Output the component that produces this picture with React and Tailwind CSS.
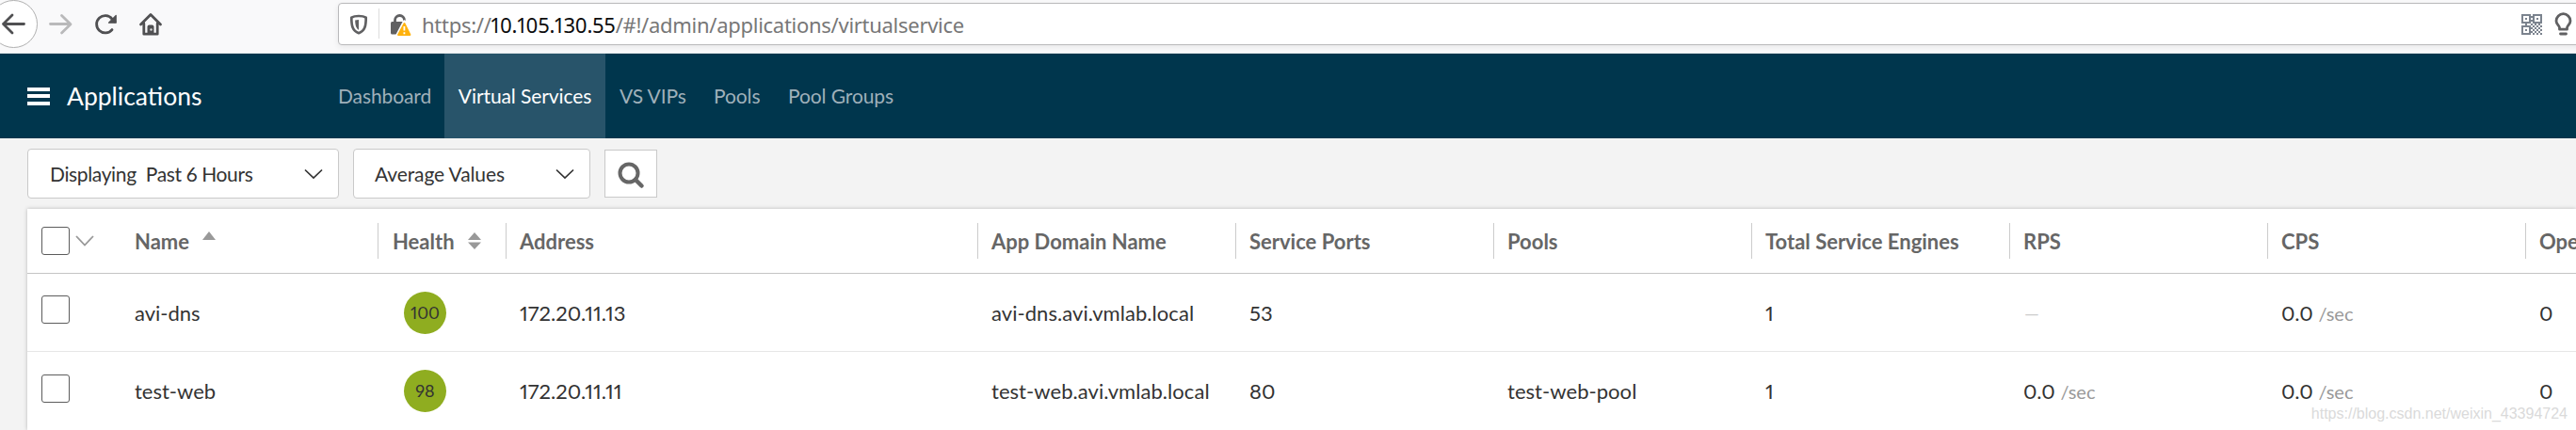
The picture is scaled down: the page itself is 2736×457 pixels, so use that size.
const UI = "font-['Lato','Noto_Sans',sans-serif]";

function Select({ className, label }) {
  return (
    <div className={"flex items-center h-[53px] mt-[11px] bg-white border border-[#c9c9c9] rounded-[4px] " + className}>
      <span className="text-[21px] leading-6 text-[#333] whitespace-pre">{label}</span>
      <svg className="ml-auto" width="20" height="12" viewBox="0 0 20 12" fill="none" stroke="#333" strokeWidth="1.7">
        <path d="M1 1.5 10 10l9-8.5" />
      </svg>
    </div>
  );
}

function Check({ className = "" }) {
  return <span className={"block w-[30px] h-[30px] shrink-0 bg-white border border-[#5c5c5c] rounded-[3px] " + className} />;
}

function Triangle({ className, d, height }) {
  return (
    <svg className={className} width="14" height={height} viewBox={`0 0 14 ${height}`}>
      <path d={d} fill="#999" />
    </svg>
  );
}

const GRID = "grid grid-cols-[105px_267px_136px_501px_274px_274px_274px_274px_274px_274px_274px] w-[2927px] text-[22px] whitespace-nowrap";

const HEADS = ["Address", "App Domain Name", "Service Ports", "Pools", "Total Service Engines", "RPS", "CPS", "Open Conns"];

const ROWS = [
  { name: "avi-dns", health: 100, cells: ["172.20.11.13", "avi-dns.avi.vmlab.local", "53", "", "1"], rps: null, cps: "0.0" },
  { name: "test-web", health: 98, cells: ["172.20.11.11", "test-web.avi.vmlab.local", "80", "test-web-pool", "1"], rps: "0.0", cps: "0.0" },
];

function Rate({ value }) {
  if (value === null) return <span className="pl-[16px] text-[20px] text-[#ccc]">—</span>;
  return (
    <span className="pl-[15px]">
      {value} <span className="text-[20px] text-[#999]">/sec</span>
    </span>
  );
}

// Dark modules of the QR glyph on an 11 x 11 grid
const QR = [
  "11111.11111",
  "1...111...1",
  "1.1.1.1.1.1",
  "1...111...1",
  "11111.11111",
  "..1..1.1.1.",
  "11111.1.1.1",
  "1...11.1.1.",
  "1.1.1.1.1.1",
  "1...11.1.1.",
  "11111.1.1.1",
];

function QrIcon() {
  return (
    <svg className="shrink-0" width="22" height="22" viewBox="0 0 11 11" fill="#7b838e">
      {QR.flatMap((row, y) =>
        [...row].map((c, x) => (c === "1" ? <rect key={`${x}-${y}`} x={x} y={y} width="1" height="1" /> : null))
      )}
    </svg>
  );
}

function NavIcons() {
  return (
    <svg className="shrink-0" width="180" height="56" viewBox="0 0 180 56" fill="none">
      <circle cx="14.5" cy="25.5" r="25" fill="#fff" stroke="#b0b0b0" />
      <g stroke="#505052" strokeWidth="2.8" strokeLinecap="round" strokeLinejoin="round">
        <path d="M25.500 25.500H3.500M13 16 3.500 25.500 13 35" />
        <path stroke="#b9b9ba" d="M53.500 25.500h21M65.500 16.500l9.500 9.200-9.500 9.200" />
        <path d="M119 31.500a9.200 9.200 0 1 1 0-11.500l3 3" />
        <path d="M123.200 16.500v7.700h-7.700z" fill="#505052" strokeWidth="1.200" />
        <path d="M149.500 26 160 15.500 170.500 26M152.800 25v11.200h14.400V25" />
      </g>
      <path d="M156.500 37V28.500q0-2 2-2h3q2 0 2 2V37z" fill="#505052" />
      <circle cx="160.500" cy="31.500" r="1.200" fill="#ddd" />
    </svg>
  );
}

export default function App() {
  return (
    <div className={"relative w-[2736px] h-[457px] overflow-hidden bg-[#f3f3f3] proportional-nums " + UI}>
      <div className="flex h-[57px] bg-[#f9f9fa] border-b border-[#e0e6e8] overflow-hidden">
        <NavIcons />
        <div className="flex shrink-0 items-center ml-[179px] mt-[3px] w-[2400px] h-[45px] bg-white border border-[#b9b9bb] rounded-[4px] shadow-[0_2px_6px_rgba(0,0,0,0.08)]">
          <svg className="shrink-0" width="84" height="43" viewBox="360 4 84 43" fill="none">
            <path d="M381 17c-3 0-5.800.5-7.700 1.700 0 8.600 1 14.300 7.700 16.500 6.700-2.200 7.700-7.900 7.700-16.500-1.900-1.200-4.700-1.700-7.700-1.700z" stroke="#606062" strokeWidth="2.700" strokeLinejoin="round" />
            <path d="M381 21v10.800c-2.700-1.500-3.800-4.800-3.800-10.300z" fill="#606062" />
            <path d="M402.500 9v32" stroke="#ddd" />
            <path d="M419.500 24v-2.500a5 5 0 0 1 10 0V24" stroke="#606062" strokeWidth="2.800" />
            <rect x="415" y="23" width="15" height="13.500" rx="1.500" fill="#606062" />
            <path d="M429.500 23 437 37.500H422z" fill="#ffb20d" stroke="#fff" strokeWidth="3.500" strokeLinejoin="round" />
            <path d="M429.500 25 435.500 37H423z" fill="#ffb20d" stroke="#ffb20d" strokeWidth="1.800" strokeLinejoin="round" />
            <path d="M429.400 28v4.500M429.400 34.200v2" stroke="#fff" strokeWidth="1.800" />
          </svg>
          <div className="ml-[4px] text-[22px] leading-8 tracking-[-0.28px] text-[#777] font-['Noto_Sans',sans-serif] whitespace-nowrap">
            https://<span className="text-[#0c0c0d]">10.105.130.55</span>/#!/admin/applications/virtualservice
          </div>
          <div className="flex shrink-0 items-center gap-[13px] ml-auto mr-[26px]">
            <QrIcon />
            <svg width="19" height="25" viewBox="0 0 19 25" fill="none" stroke="#606062">
              <path d="M5.500 18.200h8v-1.700c0-2 3.500-3.700 3.500-7.300a7.500 7.500 0 0 0-15 0c0 3.600 3.500 5.300 3.500 7.300z" strokeWidth="2.800" strokeLinejoin="round" />
              <path d="M6.500 23h6" strokeWidth="2.800" strokeLinecap="round" />
            </svg>
          </div>
        </div>
      </div>

      <div className="flex items-center h-[90px] bg-[#00364d]">
        <div className="flex flex-col gap-[3.5px] ml-[29px] w-[24px] shrink-0">
          <span className="h-[4px] bg-white" />
          <span className="h-[4px] bg-white" />
          <span className="h-[4px] bg-white" />
        </div>
        <h1 className="ml-[18px] pt-[2px] w-[270px] text-[26.5px] text-white">Applications</h1>
        <nav className="flex h-full items-center text-[21px] tracking-[-0.1px] text-[#9fb0ba] whitespace-nowrap">
          <span className="w-[131px] pl-[18px]">Dashboard</span>
          <span className="flex items-center justify-center h-full w-[171px] bg-[#28546a] text-white">Virtual Services</span>
          <span className="ml-[15px] w-[100px]">VS VIPs</span>
          <span className="w-[79px]">Pools</span>
          <span>Pool Groups</span>
        </nav>
      </div>

      <div className="flex h-[75px] pl-[29px]">
        <Select className="w-[331px] pl-[23px] pr-[16px] tracking-[-0.36px]" label="Displaying  Past 6 Hours" />
        <Select className="ml-[15px] w-[252px] pl-[22px] pr-[16px] tracking-[-0.1px]" label="Average Values" />
        <div className="flex items-center justify-center ml-[15px] mt-[12px] w-[56px] h-[51px] bg-white border border-[#c9c9c9]">
          <svg className="mt-[3px]" width="30" height="30" viewBox="0 0 30 30" fill="none" stroke="#666" strokeWidth="4">
            <circle cx="13" cy="13" r="9.500" />
            <path d="m20 20 6.500 6.500" strokeLinecap="round" strokeWidth="4.500" />
          </svg>
        </div>
      </div>

      <div className="ml-[29px] w-[2707px] h-[235px] bg-white shadow-[0_0_4px_rgba(0,0,0,0.25)] overflow-hidden">
        <div className={GRID + " h-[69px] border-b border-[#c4c4c4] font-bold text-[#666]"}>
          <div className="flex items-center pl-[15px]">
            <Check />
            <svg className="ml-[6px]" width="20" height="12" viewBox="0 0 20 12" fill="none" stroke="#999" strokeWidth="1.8">
              <path d="M1 1 10 10.500 19 1" />
            </svg>
          </div>
          <div className="flex items-center pl-[9px]">
            Name
            <Triangle className="ml-[14px] mb-[12px]" height={9} d="M0 9 7 0l7 9z" />
          </div>
          <div className="flex items-center">
            <span className="w-px h-[38px] bg-[#ccc]" />
            <span className="ml-[15px]">Health</span>
            <Triangle className="ml-[14px]" height={18} d="M0 8 7 0l7 8zM0 10.500h14L7 18z" />
          </div>
          {HEADS.map((label) => (
            <div key={label} className="flex items-center">
              <span className="w-px h-[38px] bg-[#ccc]" />
              <span className="ml-[14px]">{label}</span>
            </div>
          ))}
        </div>
        {ROWS.map((r) => (
          <div key={r.name} className={GRID + " h-[83px] items-center border-b border-[#e6e6e6] last:border-0 text-[#333]"}>
            <Check className="ml-[15px] mb-[6px]" />
            <span className="pl-[9px]">{r.name}</span>
            <span className="flex items-center justify-center ml-[28px] w-[45px] h-[45px] rounded-full bg-[#8fad20] text-[18px]">{r.health}</span>
            {r.cells.map((c, i) => (
              <span key={i} className="pl-[15px] tracking-[0.05px]">{c}</span>
            ))}
            <Rate value={r.rps} />
            <Rate value={r.cps} />
            <span className="pl-[15px]">0</span>
          </div>
        ))}
      </div>

      <div className="absolute right-[9px] bottom-[7px] text-[16px] leading-5 text-[#dadada] font-['Liberation_Sans',sans-serif]">
        https://blog.csdn.net/weixin_43394724
      </div>
    </div>
  );
}
